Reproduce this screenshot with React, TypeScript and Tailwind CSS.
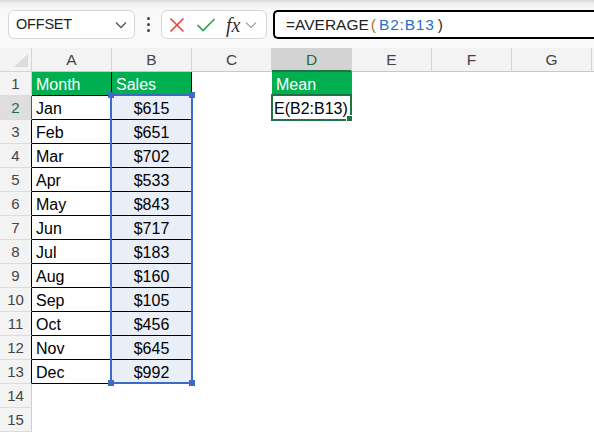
import React from "react";

const cols = ["A", "B", "C", "D", "E", "F", "G"];
const data: [string, string][] = [
  ["Jan", "$615"],
  ["Feb", "$651"],
  ["Mar", "$702"],
  ["Apr", "$533"],
  ["May", "$843"],
  ["Jun", "$717"],
  ["Jul", "$183"],
  ["Aug", "$160"],
  ["Sep", "$105"],
  ["Oct", "$456"],
  ["Nov", "$645"],
  ["Dec", "$992"],
];

function Chevron({ className }: { className?: string }) {
  return (
    <svg width="12" height="8" viewBox="0 0 12 8" className={className}>
      <path d="M1 1.5 L6 6.5 L11 1.5" fill="none" stroke="currentColor" strokeWidth="1.3" />
    </svg>
  );
}

function RowHeader({ n }: { n: number }) {
  const selected = n === 2;
  const right =
    n === 2 ? "border-r-[#217346]" : n >= 3 && n <= 13 ? "border-r-black" : "border-r-[#cfcfcf]";
  return (
    <div
      className={`w-[32px] h-[24px] shrink-0 flex items-center justify-center border-r border-b border-b-[#dcdcdc] ${right} ${
        selected ? "bg-[#dedede] text-[#1e6b41]" : "bg-[#f3f3f3] text-[#444]"
      } text-[15px] pt-[1px]`}
    >
      {n}
    </div>
  );
}

function Cell({
  children,
  kind,
  align = "left",
}: {
  children?: React.ReactNode;
  kind: "green" | "boxed" | "boxedSel" | "plain";
  align?: "left" | "center";
}) {
  const base =
    "w-[80px] h-[24px] shrink-0 flex items-center text-[16px] pt-[2px] border-r border-b overflow-hidden whitespace-nowrap";
  const k =
    kind === "green"
      ? "bg-[#00b050] text-white border-black"
      : kind === "boxed"
      ? "bg-white text-black border-black"
      : kind === "boxedSel"
      ? "bg-[#eaeef7] text-black border-black"
      : "bg-white text-black border-transparent";
  const a = align === "center" ? "justify-center" : "justify-start pl-[4px]";
  return <div className={`${base} ${k} ${a}`}>{children}</div>;
}

export default function App() {
  return (
    <div
      className="w-[594px] h-[433px] overflow-hidden bg-white relative"
      style={{ fontFamily: '"Liberation Sans", Arial, sans-serif' }}
    >
      {/* Toolbar */}
      <div className="h-[48px] bg-[linear-gradient(#d9d9d9,#f1f1f1_4px,#f9f9f9_10px)] flex items-start pt-[10px] pl-[8px]">
        <div className="w-[127px] h-[29px] rounded-[6px] border border-[#d5d5d5] bg-white flex items-center justify-between pl-[7px] pr-[7px] text-[14.5px] text-[#222]">
          <span className="tracking-[-0.2px]">OFFSET</span>
          <Chevron className="text-[#555]" />
        </div>
        <div className="w-[26px] h-[29px] flex flex-col items-center justify-center gap-[3px]">
          <span className="w-[3px] h-[3px] rounded-full bg-[#444]" />
          <span className="w-[3px] h-[3px] rounded-full bg-[#444]" />
          <span className="w-[3px] h-[3px] rounded-full bg-[#444]" />
        </div>
        <div className="w-[106px] h-[29px] rounded-[6px] border border-[#d5d5d5] bg-white flex items-center pl-[7px]">
          <svg width="16" height="16" viewBox="0 0 16 16">
            <path d="M1.5 1.5 L14.5 14.5 M14.5 1.5 L1.5 14.5" stroke="#e8403f" strokeWidth="1.6" fill="none" />
          </svg>
          <svg width="20" height="16" viewBox="0 0 20 16" className="ml-[11px]">
            <path d="M1.5 8 L7 13.5 L18.5 2" stroke="#2e9e4f" strokeWidth="1.6" fill="none" />
          </svg>
          <span
            className="ml-[10px] text-[20px] italic text-[#333] leading-none"
            style={{ fontFamily: '"Liberation Serif", "DejaVu Serif", serif' }}
          >
            fx
          </span>
          <Chevron className="ml-[5px] text-[#aaa]" />
        </div>
        <div className="ml-[6px] flex-1 h-[29px] rounded-l-[5px] border-2 border-r-0 border-black bg-white flex items-center pl-[11px] text-[15.5px] text-[#222]">
          <span>=AVERAGE</span>
          <span className="ml-[2px] mr-[3px] text-[#a8741f]">(</span>
          <span className="text-[#1f6fc8] tracking-[0.8px]">B2:B13</span>
          <span className="ml-[3px] text-[#3d2a14]">)</span>
        </div>
      </div>

      {/* Column header */}
      <div className="flex h-[24px]">
        <div className="w-[32px] h-[24px] shrink-0 bg-[#f3f3f3] border-r border-b border-[#d4d4d4] flex items-end justify-end pr-[3px] pb-[4px]">
          <svg width="14" height="13" viewBox="0 0 14 13">
            <path d="M14 0 L14 13 L0 13 Z" fill="#dcdcdc" />
          </svg>
        </div>
        {cols.map((c) => (
          <div
            key={c}
            className={`w-[80px] h-[24px] shrink-0 flex items-center justify-center border-r border-r-[#d4d4d4] text-[15.5px] pt-[1px] ${
              c === "D"
                ? "bg-[#d3d3d3] text-[#1e6b41] border-b-2 border-b-[#217346]"
                : "bg-[#f3f3f3] text-[#444] border-b border-b-[#c8c8c8]"
            }`}
          >
            {c}
          </div>
        ))}
        <div className="flex-1 bg-[#f3f3f3] border-b border-b-[#c8c8c8]" />
      </div>

      {/* Row 1 */}
      <div className="flex">
        <RowHeader n={1} />
        <Cell kind="green">Month</Cell>
        <Cell kind="green">Sales</Cell>
        <Cell kind="plain" />
        <div className="w-[80px] h-[24px] shrink-0 flex items-center pl-[4px] pt-[2px] text-[16px] bg-[#00b050] text-white">
          Mean
        </div>
      </div>

      {/* Data rows */}
      {data.map(([m, s], i) => (
        <div className="flex" key={m}>
          <RowHeader n={i + 2} />
          <Cell kind="boxed">{m}</Cell>
          <Cell kind="boxedSel" align="center">
            {s}
          </Cell>
          <Cell kind="plain" />
          {i === 0 ? (
            <div className="w-[80px] h-[24px] shrink-0 flex items-center pl-[2px] pt-[2px] text-[16px] whitespace-nowrap overflow-hidden">
              E(B2:B13)
            </div>
          ) : (
            <Cell kind="plain" />
          )}
        </div>
      ))}

      {/* Rows 14, 15 */}
      {[14, 15].map((n) => (
        <div className="flex" key={n}>
          <RowHeader n={n} />
        </div>
      ))}

      {/* Selection overlay B2:B13 */}
      <div className="absolute left-[110px] top-[94px] w-[83px] h-[290px] border-2 border-[#3a6cc6] pointer-events-none">
        <span className="absolute -left-[4px] -top-[4px] w-[6px] h-[6px] bg-[#3a6cc6]" />
        <span className="absolute -right-[4px] -top-[4px] w-[6px] h-[6px] bg-[#3a6cc6]" />
        <span className="absolute -left-[4px] -bottom-[4px] w-[6px] h-[6px] bg-[#3a6cc6]" />
        <span className="absolute -right-[4px] -bottom-[4px] w-[6px] h-[6px] bg-[#3a6cc6]" />
      </div>

      {/* Active cell D2 */}
      <div className="absolute left-[271px] top-[94px] w-[81px] h-[27px] border-2 border-[#217346] pointer-events-none">
        <span className="absolute -right-[3px] -bottom-[3px] w-[5px] h-[5px] bg-[#217346] border border-white box-content" />
      </div>
    </div>
  );
}
